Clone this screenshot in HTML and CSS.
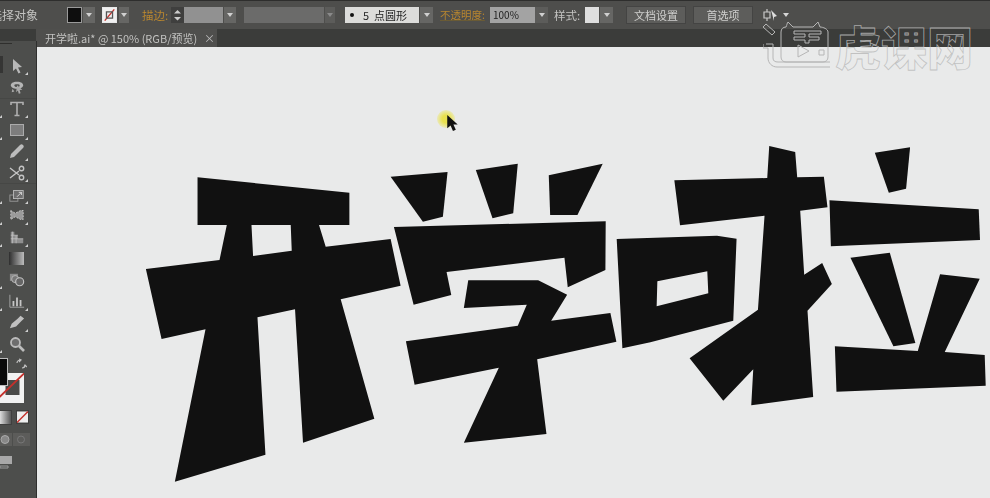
FILE: index.html
```html
<!DOCTYPE html>
<html lang="zh">
<head>
<meta charset="utf-8">
<title>开学啦.ai</title>
<link rel="stylesheet" href="styles.css">
</head>
<body>
<div class="app">
  <header class="control-bar">
    <span class="label sel-label">选择对象</span>
    <span class="swatch fill-swatch"></span><span class="drop d-fill"><i></i></span>
    <span class="swatch stroke-swatch"><svg viewBox="0 0 15 15" class="fit"><path d="M2 14 13 1" stroke="#c8302c" stroke-width="1.6"/><path d="M4 4h7v7H4z" fill="none" stroke="#555" stroke-width="1.5"/></svg></span><span class="drop d-stroke"><i></i></span>
    <span class="label orange stroke-label">描边:</span>
    <span class="spin"><svg viewBox="0 0 13 15" class="fit"><path d="M6.500 2.500 10 6H3zM6.500 13 3 9.500h7z" fill="#ccc"/></svg></span>
    <span class="field f-weight"></span><span class="drop d-weight"><i></i></span>
    <span class="field f-profile"></span><span class="drop d-profile"><i></i></span>
    <span class="field f-brush"><b class="dot"></b><span class="brush-num">5</span><span>点圆形</span></span><span class="drop d-brush"><i></i></span>
    <span class="label orange op-label">不透明度:</span>
    <span class="field f-opacity">100%</span><span class="drop d-opacity"><i></i></span>
    <span class="label style-label">样式:</span>
    <span class="field f-style"></span><span class="drop d-style"><i></i></span>
    <span class="btn btn-doc">文档设置</span>
    <span class="btn btn-pref">首选项</span>
    <svg class="arrange" viewBox="0 0 26 16"><path d="M1 5h6v6H1zM4 2v3M4 11v3" fill="none" stroke="#c9c9c9" stroke-width="1.200"/><path d="M8 3l6 6-3 1v4z" fill="#ddd"/><path d="M20 6h6l-3 4z" fill="#d5d5d5"/></svg>
  </header>
  <div class="tab-bar">
    <div class="tab-spacer"></div>
    <div class="tab"><span>开学啦.ai* @ 150% (RGB/预览)</span><span class="close">×</span></div>
  </div>
  <div class="work">
    <aside class="tools">
      <div class="grip"></div>
      <div class="tool t-first c-r"><svg viewBox="0 0 16 16"><path d="M4 1l9 8-4 .5 2.500 5-2 1-2.500-5L4 13z" fill="#b8b8b8"/></svg></div>
      <div class="tool"><svg viewBox="0 0 18 16"><path d="M9 2c5 0 7 2 7 4s-3 4-7 4-7-2-7-4 2-4 7-4zm0 3c-2 0-3 .4-3 1.200S7 8 9 8s3-.6 3-1.800S11 5 9 5z" fill="#b5b5b5"/><path d="M9 6l6 5-3 .5L13 15l-2 .5-1-3.500-2 2zM4 10l-1 4 3-1z" fill="#aaa"/></svg></div>
      <div class="tool t-gap c-r c-l"><svg viewBox="0 0 16 16"><path d="M2 4V1.500h12V4M8 2v12M5.500 14.500h5" fill="none" stroke="#b0b0b0" stroke-width="1.600"/></svg></div>
      <div class="tool c-r c-l"><svg viewBox="0 0 16 16"><rect x="1.500" y="2.500" width="13" height="11" fill="#7d7d7d" stroke="#ababab"/></svg></div>
      <div class="tool c-r"><svg viewBox="0 0 16 16"><path d="M1 15l1-4 9-9c1-1 2-1 3 0s1 2 0 3l-9 9z" fill="#bcbcbc"/></svg></div>
      <div class="tool c-r"><svg viewBox="0 0 16 16"><g fill="none" stroke="#c4c4c4" stroke-width="1.400"><circle cx="12.500" cy="3.500" r="2.200"/><circle cx="12.500" cy="12.500" r="2.200"/><path d="M1 3l9 7M1 13l9-7"/></g></svg></div>
      <div class="tool t-gap c-r c-l"><svg viewBox="0 0 18 16"><rect x="1" y="8" width="9" height="7" fill="none" stroke="#999"/><rect x="5" y="3" width="11" height="9" fill="#6e6e6e" stroke="#bbb"/><path d="M9 10l5-5M11 5h3v3" stroke="#ddd" fill="none"/></svg></div>
      <div class="tool c-r c-l"><svg viewBox="0 0 18 16"><path d="M2 3l5 3 6-3h3v10h-3l-6-3-5 3z" fill="#9a9a9a" stroke="#ccc" stroke-dasharray="2 1.500"/></svg></div>
      <div class="tool c-r c-l"><svg viewBox="0 0 18 16"><path d="M2 2h4v13H2zM6 6h4v9H6zM10 10h6v5h-6z" fill="#8f8f8f"/><path d="M2 6h8M2 10h14M4 2v13M8 6v9" stroke="#c4c4c4" stroke-width=".8"/></svg></div>
      <div class="tool"><span class="grad"></span></div>
      <div class="tool c-l"><svg viewBox="0 0 18 16"><rect x="1" y="1" width="9" height="8" fill="#8d8d8d"/><circle cx="7" cy="7" r="4" fill="#777" stroke="#bbb"/><circle cx="12" cy="10" r="4.500" fill="#666" stroke="#c4c4c4" stroke-width="1.300"/></svg></div>
      <div class="tool c-r c-l"><svg viewBox="0 0 18 16"><path d="M1 1v14h16" fill="none" stroke="#aaa"/><path d="M4 8h2v6H4zM8 4h2v10H8zM12 7h2v7h-2z" fill="#c6c6c6"/></svg></div>
      <div class="tool c-r"><svg viewBox="0 0 18 16"><path d="M1 15l2-5 7-6 3-3 4 3-3 3-6 6z" fill="#c0c0c0"/></svg></div>
      <div class="tool c-l"><svg viewBox="0 0 16 16"><circle cx="6.500" cy="6.500" r="4.500" fill="#6e6e6e" stroke="#bcbcbc" stroke-width="1.800"/><path d="M10 10l5 5" stroke="#bcbcbc" stroke-width="2.600"/></svg></div>
      <div class="color-well">
        <span class="well-stroke"><svg viewBox="0 0 23 30" class="fit"><path d="M5 7h14v15H5z" fill="#4a4a48"/><path d="M-1 24 24 0" stroke="#c4302b" stroke-width="1.800"/></svg></span>
        <span class="well-fill"></span>
        <svg class="swap" viewBox="0 0 12 12"><path d="M2 5c0-2 2-3 4-3M4 1 6 2 4 4M10 7c0 2-1 3-3 3M9 9 10 7 12 9" fill="none" stroke="#c2c2c2" stroke-width="1.200"/></svg>
      </div>
      <div class="mode-row">
        <span class="mode"><span class="mode-grad"></span></span>
        <span class="mode mode-none"><svg viewBox="0 0 12 12" class="fit"><rect width="12" height="12" fill="#eee"/><path d="M0 12 12 0" stroke="#c4302b" stroke-width="1.600"/></svg></span>
      </div>
      <div class="draw-row">
        <span class="draw d-one"><svg viewBox="0 0 12 12" class="fit"><circle cx="5" cy="6" r="4" fill="#888" stroke="#aaa"/></svg></span>
        <span class="draw d-two"><svg viewBox="0 0 17 12" class="fit"><circle cx="8" cy="6" r="3.500" fill="none" stroke="#777"/></svg></span>
      </div>
      <div class="screen"><svg viewBox="0 0 12 14" class="fit"><path d="M0 1h12v8H0z" fill="#a8a8a8"/><path d="M0 11h8v2H0z" fill="none" stroke="#999"/></svg></div>
    </aside>
    <main class="canvas">
      <svg class="art" viewBox="36 47 954 451" preserveAspectRatio="none">
        <g fill="#111">
          <path fill-rule="evenodd" d="M196.700 177.300 348.700 192.700V225H318.300L325 246.700 390 239 400 285.700 340 299.300 373.700 418.700 302.300 442.700 294.300 309.300 256.700 317.300 264.700 454.700 174 481.700 204.700 329.300 160.700 339 145 269 218.700 260 226 225H196.700ZM250.700 225H290L291 250.700 252.300 256Z"/>
          <path d="M390 176.700 447 172 442.300 216.700 422.300 221.700Z"/>
          <path d="M475.300 170 517.300 163.700 512.700 213.300 492 218.300Z"/>
          <path d="M548.300 175.300 602.300 163.700 577 215H549.700Z"/>
          <path d="M393.300 227 605.300 221.300 605 270 567.300 287.300 564 257.700 446 272 450.700 295 413 304.700Z"/>
          <path d="M467.700 280.300H537.700L566.700 294.700 550.700 320.700 610 313 616 341.700 536.700 359.300 546 434 463.300 442.700 498.300 367.700 414 384.700 405.300 341.300 517.300 325.700 526.300 304.700 463.300 308Z"/>
          <path fill-rule="evenodd" d="M616.300 239 716.700 235.700 736.300 238.700 733 320.700 650 342.300 622 348.300ZM657 281.300 707 271.300 708 293.300 656.300 306.300Z"/>
          <path d="M769 146 795 152 797 177.300 823.700 176.700 827.300 207.300 800 210.700 804 274.700 822 263 831.700 284 807.300 310.700 813 397 751 405.300 753 369.300 723 400.700 689.300 358.300 757.700 309.700 764.300 215.700 679.700 225.300 674 180.300 767 178Z"/>
          <path d="M874.700 152.700 910 147.300 906 188.700 888.700 192.700Z"/>
          <path d="M829.300 200.300 978.700 209.300 980 240 830.700 246.300Z"/>
          <path d="M850.300 257.700 889.700 252.700 915.300 343 893.300 346.300Z"/>
          <path d="M834.700 346.300 917.700 351 940 274.300 979.700 278.700 944.700 352 984.700 355 985.700 385.700 836.300 391.700Z"/>
        </g>
      </svg>
      <span class="halo"></span>
      <svg class="cursor" viewBox="0 0 12 20"><path d="M1 1v14l3.500-3 2.500 6 3-1.300-2.500-5.700H12z" fill="#111"/></svg>
    </main>
  </div>
  <div class="watermark">
    <svg class="wm-logo" viewBox="0 0 68 46"><g fill="none" stroke="#b6b6b6" stroke-width="1"><path d="M0 5 3 2l9 8-3 3z"/><path d="M3 22h7v14c0 3 2 4 5 4h52"/><path d="M0 26h5M0 22v4M5 26v10c0 5 4 9 9 9h53"/><path d="M18 10c0-3 2-5 5-5 1-2 1-4 2-5l5 5h20l5-5 2 5c3 0 8 2 8 5v25c0 3-2 5-5 5H23c-3 0-5-2-5-5z"/><path d="M31 9h27v3H46v3h10v3H46v3h-4v-3H31v-3h11v-3H31z"/><path d="M35 23v12l11-6z"/><path d="M56 28h5v5h-5z"/></g></svg>
    <span class="wm-text">虎课网</span>
  </div>
</div>
</body>
</html>
```
FILE: styles.css
```css
* { box-sizing: border-box; }
html, body { margin: 0; padding: 0; height: 100%; background: #e9eaea; overflow: hidden; }
.app {
  width: 990px; height: 498px; display: flex; flex-direction: column; position: relative;
  font-family: "Noto Sans CJK SC", "Liberation Sans", sans-serif; overflow: hidden;
}
.fit { display: block; width: 100%; height: 100%; }

/* control bar */
.control-bar {
  height: 29px; flex: none; background: #4e4e4c; border-top: 1px solid #2e2e2d;
  display: flex; align-items: center; color: #c4c4c2; font-size: 11px; padding-bottom: 1px;
  filter: blur(.35px);
}
.label { white-space: nowrap; }
.sel-label { margin-left: -10px; width: 47px; font-size: 12px; flex: none; }
.orange { color: #b8862f; }
.swatch { width: 15px; height: 16px; flex: none; border: 1px solid #9a9a9a; }
.fill-swatch { margin-left: 30px; background: #0e0e0e; }
.stroke-swatch { margin-left: 7px; background: #f0f0f0; border-color: #e8e8e8; }
.drop {
  width: 12px; height: 16px; flex: none; background: #666664; margin-left: 1px;
  display: flex; align-items: center; justify-content: center;
}
.drop i { width: 0; height: 0; border: 3px solid transparent; border-top: 4px solid #d0d0d0; border-bottom: 0; }
.d-stroke { margin-left: 2px; width: 10px; }
.stroke-label { margin-left: 13px; width: 29px; font-size: 11.500px; }
.spin { width: 13px; height: 16px; flex: none; background: #3f3f3e; }
.field { height: 16px; flex: none; display: flex; align-items: center; }
.f-weight { width: 39px; background: #919191; }
.d-weight { width: 12px; margin-left: 1px; }
.f-profile { width: 80px; background: #6b6b6a; margin-left: 8px; }
.d-profile { width: 10px; margin-left: 1px; background: #5c5c5a; }
.d-profile i { border-top-color: #8a8a8a; }
.f-brush { width: 74px; background: #dcdcda; margin-left: 10px; color: #222; padding-left: 5px; font-size: 11px; }
.dot { width: 4px; height: 4px; border-radius: 50%; background: #111; flex: none; }
.brush-num { margin: 0 5px 0 9px; }
.d-brush { margin-left: 1px; width: 13px; }
.op-label { margin-left: 7px; width: 46px; font-size: 10.500px; text-decoration: underline; text-decoration-color: #6a5b35; flex: none; }
.f-opacity { width: 45px; background: #a3a3a3; color: #222; padding-left: 3px; font-size: 10px; margin-left: 4px; }
.d-opacity { width: 13px; margin-left: 0; background: #5c5c5a; }
.style-label { margin-left: 6px; width: 31px; font-size: 11.500px; flex: none; }
.f-style { width: 14px; background: #dedede; }
.d-style { width: 13px; }
.btn {
  height: 18px; flex: none; display: flex; align-items: center; justify-content: center;
  background: #5d5d5b; border: 1px solid #444443; color: #cfcfcd; font-size: 11px;
}
.btn-doc { width: 60px; margin-left: 13px; }
.btn-pref { width: 60px; margin-left: 7px; }
.arrange { width: 26px; height: 16px; flex: none; margin-left: 10px; }

/* tab bar */
.tab-bar { height: 18px; flex: none; background: #3b3c3a; display: flex; filter: blur(.3px); }
.tab-spacer { width: 36px; flex: none; }
.tab {
  width: 181px; background: #4f4f4d; color: #c2c2c0; font-size: 11px; display: flex;
  align-items: center; padding-left: 9px; gap: 4px; white-space: nowrap;
}
.tab span:first-child { width: 155px; flex: none; }
.close { color: #bbb; font-size: 11px; }

/* work area */
.work { flex: 1; display: flex; min-height: 0; }
.tools {
  width: 37px; flex: none; background: #4d4e4c; border-right: 1px solid #2f2f2e; margin-top: -6px;
  display: flex; flex-direction: column; align-items: stretch; position: relative; filter: blur(.35px);
}
.grip { height: 3px; margin: 2px 0 0; width: 12px; border-top: 1px solid #2f2f2d; flex: none; }
.tool {
  height: 21.400px; flex: none; display: flex; align-items: center; justify-content: center;
  padding-right: 3px; position: relative;
}
.tool svg { width: 16px; height: 16px; }
.t-first { margin-top: 9px; }
.t-first::before { content: ""; position: absolute; left: 0; top: 1px; width: 3px; height: 17px; background: #353534; }
.t-gap { border-top: 1px solid #464745; }
.c-r::after, .c-l::before {
  content: ""; position: absolute; bottom: 1px; width: 0; height: 0;
  border-style: solid; border-width: 0 0 3px 3px; border-color: transparent transparent #cfcfcf transparent;
}
.c-r::after { left: 25px; }
.c-l::before { left: -1px; }
.grad { width: 15px; height: 13px; background: linear-gradient(90deg, #2e2e2e, #bcbcbc); }
.color-well { height: 60px; position: relative; flex: none; margin-top: 4px; }
.well-stroke { position: absolute; left: 0; top: 15px; width: 24px; height: 30px; background: #f1f1f1; }
.well-fill { position: absolute; left: 0; top: 0; width: 8px; height: 28px; background: #0a0a0a; border: 1px solid #bbb; border-left: 0; }
.swap { position: absolute; left: 15px; top: 0; width: 12px; height: 12px; }
.mode-row { display: flex; gap: 6px; margin-top: -7px; height: 14px; flex: none; }
.mode { width: 11px; height: 13px; flex: none; outline: 1px solid #3f3f3e; }
.mode-grad { display: block; width: 100%; height: 100%; background: linear-gradient(90deg, #dcdcdc, #555); }
.mode-none { width: 11px; height: 12px; }
.draw-row { display: flex; gap: 1px; margin-top: 8px; height: 13px; flex: none; }
.draw { height: 13px; background: #5c5c5a; flex: none; }
.d-one { width: 12px; }
.d-two { width: 17px; }
.screen { width: 12px; height: 14px; margin-top: 9px; flex: none; }

/* canvas */
.canvas { flex: 1; position: relative; background: #e9eaea; min-width: 0; }
.art { display: block; width: 100%; height: 100%; filter: blur(.3px); }
.halo {
  position: absolute; left: 400px; top: 63px; width: 18px; height: 18px; border-radius: 50%;
  background: radial-gradient(circle, #e9e14f 30%, rgba(235,230,120,.6) 62%, rgba(235,230,120,0) 100%);
}
.cursor { position: absolute; left: 408.500px; top: 67px; width: 12px; height: 19px; }

/* watermark */
.watermark {
  position: absolute; left: 763px; top: 22px; display: flex; align-items: center; gap: 4px; height: 46px;
  pointer-events: none;
}
.wm-logo { width: 68px; height: 46px; flex: none; }
.wm-text {
  font-size: 46px; line-height: 46px; font-weight: 900; color: transparent; white-space: nowrap;
  -webkit-text-stroke: .8px rgba(186,186,186,.85);
}
```
